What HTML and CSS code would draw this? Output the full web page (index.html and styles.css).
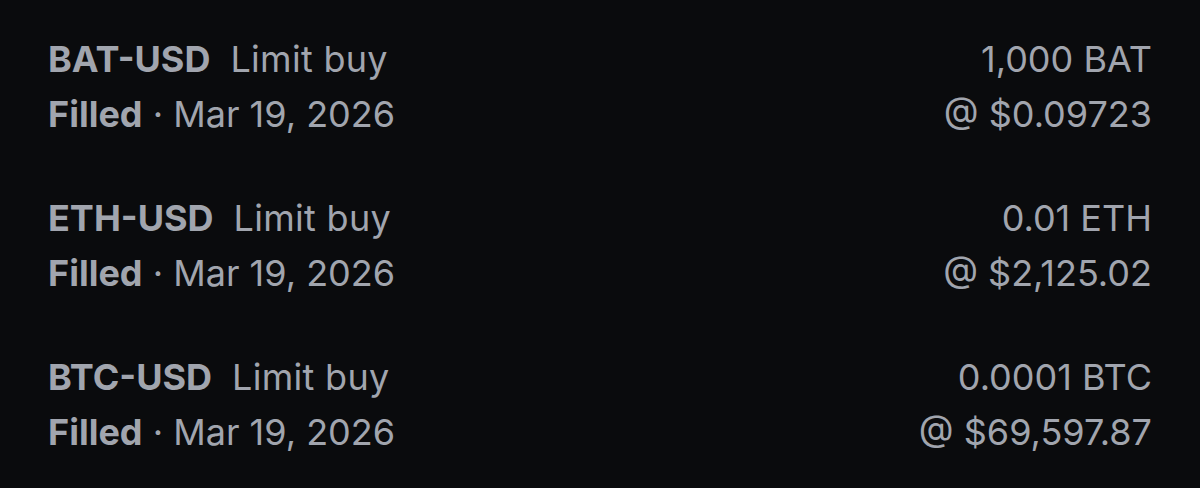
FILE: index.html
```html
<!DOCTYPE html>
<html lang="en">
<head>
    <meta charset="UTF-8">
    <meta name="viewport" content="width=device-width, initial-scale=1.0">
    <title>Orders</title>
    <link rel="stylesheet" href="styles.css">
</head>
<body>
    <div class="orders">
        <div class="order">
            <div class="order-info">
                <div class="line"><span class="pair">BAT-USD</span><span class="type">Limit buy</span></div>
                <div class="line"><span class="status">Filled</span> · Mar 19, 2026</div>
            </div>
            <div class="order-amount">
                <div class="line">1,000 BAT</div>
                <div class="line">@ $0.09723</div>
            </div>
        </div>

        <div class="order">
            <div class="order-info">
                <div class="line"><span class="pair">ETH-USD</span><span class="type">Limit buy</span></div>
                <div class="line"><span class="status">Filled</span> · Mar 19, 2026</div>
            </div>
            <div class="order-amount">
                <div class="line">0.01 ETH</div>
                <div class="line">@ $2,125.02</div>
            </div>
        </div>

        <div class="order">
            <div class="order-info">
                <div class="line"><span class="pair">BTC-USD</span><span class="type">Limit buy</span></div>
                <div class="line"><span class="status">Filled</span> · Mar 19, 2026</div>
            </div>
            <div class="order-amount">
                <div class="line">0.0001 BTC</div>
                <div class="line">@ $69,597.87</div>
            </div>
        </div>
    </div>
</body>
</html>
```

FILE: styles.css
```css
body {
    margin: 0;
    background-color: #0a0b0d;
    color: #a1a5ae;
    font-family: Inter, "Noto Sans", Arial, sans-serif;
    font-size: 36px;
}
.orders {
    display: flex;
    flex-direction: column;
    gap: 49px;
    padding: 32px 48px 0 48px;
}
.order {
    display: flex;
    justify-content: space-between;
}
.line {
    line-height: 55px;
    white-space: nowrap;
}
.pair, .status {
    font-weight: 700;
}
.type {
    margin-left: 20px;
    letter-spacing: 0.3px;
}
.order-amount {
    text-align: right;
}
```
